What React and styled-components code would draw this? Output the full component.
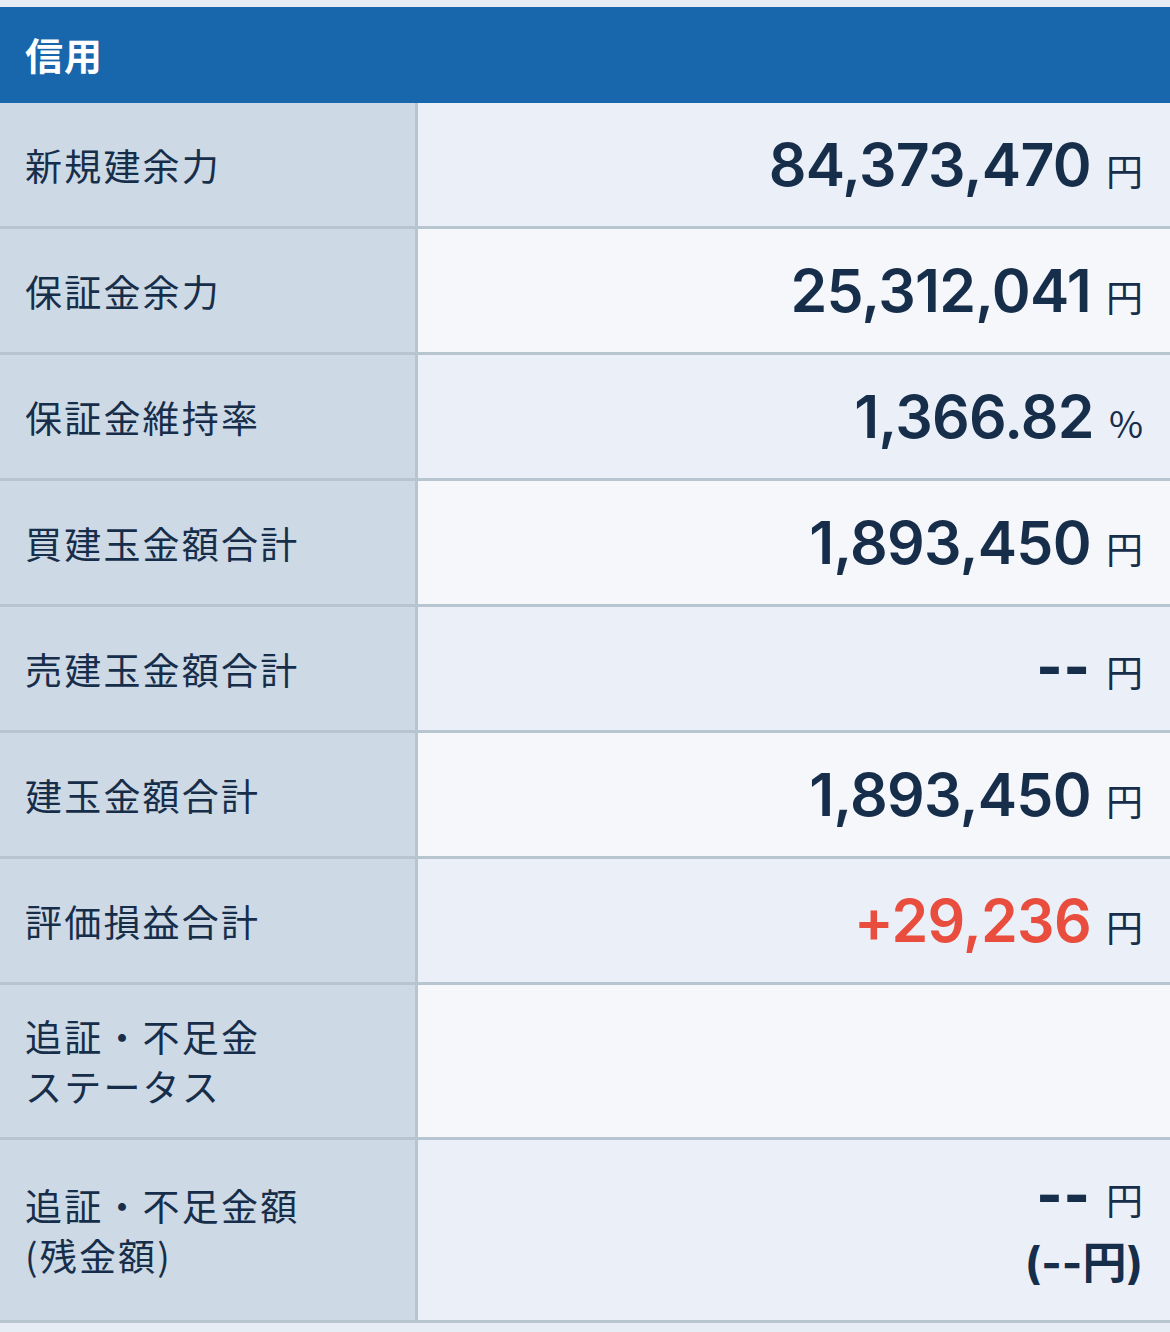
import styled, { createGlobalStyle } from "styled-components";

const GlobalStyle = createGlobalStyle`
	html, body {
		margin: 0;
		padding: 0;
		background: #e6edf5;
	}
	body {
		font-family: "Noto Sans CJK JP", "Noto Sans", sans-serif;
		color: #172e4b;
	}
`;

const Page = styled.div`
	padding: 7px 0 10px;
`;
const Header = styled.div`
	height: 96px;
	background: #1866ab;
	color: #fff;
	display: flex;
	align-items: center;
	padding: 0 0 4px 25px;
	box-sizing: border-box;
	font-size: 38px;
	font-weight: 700;
	letter-spacing: 1px;
`;
const Row = styled.div`
	display: grid;
	grid-template-columns: 418px 1fr;
	min-height: ${(p) => p.$h}px;
	border-bottom: 3px solid #b6c5d0;
`;
const Label = styled.div`
	background: #cdd9e4;
	border-right: 3px solid #b6c5d0;
	display: flex;
	align-items: center;
	padding-left: 25px;
	font-size: 37px;
	line-height: 50px;
	letter-spacing: 2.2px;
	white-space: pre-line;
`;
const Cell = styled.div`
	background: ${(p) => (p.$alt ? "#f6f7fb" : "#ebf0f8")};
	display: flex;
	flex-direction: column;
	align-items: flex-end;
	justify-content: center;
	padding-right: 27px;
`;
const Value = styled.div`
	display: flex;
	align-items: baseline;
	gap: 15px;
`;
const Num = styled.span`
	font-family: Inter, "Noto Sans", sans-serif;
	font-weight: 600;
	font-size: 59px;
	letter-spacing: -0.7px;
	color: ${(p) => (p.$red ? "#e84d3d" : "#172e4b")};
`;
const Dash = styled.span`
	font-family: Inter, sans-serif;
	font-weight: 800;
	font-size: 56px;
	letter-spacing: 1px;
	line-height: 1;
`;
const Unit = styled.span`
	font-family: "Noto Sans CJK JP", Inter, sans-serif;
	font-size: 37px;
`;
const Sub = styled.div`
	font-family: Inter, "Noto Sans CJK JP", sans-serif;
	font-weight: 700;
	font-size: 44px;
	line-height: 62px;
	margin-top: 6px;
`;

const rows = [
	{ label: "新規建余力", num: "84,373,470", unit: "円" },
	{ label: "保証金余力", num: "25,312,041", unit: "円" },
	{ label: "保証金維持率", num: "1,366.82", unit: "%" },
	{ label: "買建玉金額合計", num: "1,893,450", unit: "円" },
	{ label: "売建玉金額合計", dash: true, unit: "円" },
	{ label: "建玉金額合計", num: "1,893,450", unit: "円" },
	{ label: "評価損益合計", num: "+29,236", unit: "円", red: true },
	{ label: "追証・不足金\nステータス", h: 152 },
	{ label: "追証・不足金額\n(残金額)", dash: true, unit: "円", sub: "(--円)", h: 180 },
];

export default function App() {
	return (
		<Page>
			<GlobalStyle />
			<Header>信用</Header>
			{rows.map((r, i) => (
				<Row key={i} $h={r.h || 123}>
					<Label>{r.label}</Label>
					<Cell $alt={i % 2 === 1}>
						{r.unit && (
							<Value>
								{r.dash ? <Dash>--</Dash> : <Num $red={r.red}>{r.num}</Num>}
								<Unit>{r.unit}</Unit>
							</Value>
						)}
						{r.sub && <Sub>{r.sub}</Sub>}
					</Cell>
				</Row>
			))}
		</Page>
	);
}
